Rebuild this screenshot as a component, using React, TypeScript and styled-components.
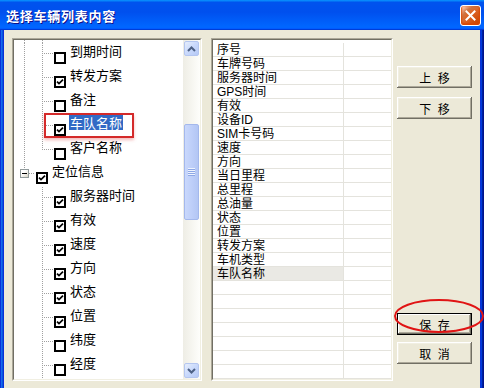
import React from 'react';
import styled, { createGlobalStyle, css } from 'styled-components';

const FONT = `"Noto Sans CJK SC", "Noto Sans", sans-serif`;
const LIST_FONT = `"Liberation Sans", "Noto Sans CJK SC", sans-serif`;
const VDOT = 'repeating-linear-gradient(to bottom, #a0a0a0 0 1px, transparent 1px 2px)';
const HDOT = 'repeating-linear-gradient(to right, #a0a0a0 0 1px, transparent 1px 2px)';
const GRID = '#e4e3dd';

const GlobalStyle = createGlobalStyle`
  html, body { margin: 0; padding: 0; background: #ffffff; }
  body { font-family: ${FONT}; }
  *, *::before, *::after { box-sizing: border-box; }
`;

const Window = styled.div`
  position: relative;
  width: 484px;
  height: 388px;
  display: flex;
  flex-direction: column;
  overflow: hidden;
  font-family: ${FONT};
`;

const TitleBar = styled.div`
  flex: none;
  height: 30px;
  display: flex;
  align-items: center;
  justify-content: space-between;
  padding: 0 3px 0 6px;
  background: linear-gradient(180deg, #0997ff, #0053ee 8%, #0050ee 40%, #0066ff 88%, #0066ff 93%, #005bff 95%, #003dd7 96%, #003dd7);
`;

const Title = styled.div`
  color: #ffffff;
  font-weight: 700;
  font-size: 13px;
  letter-spacing: 0.75px;
  text-shadow: 1px 1px #0f1089;
  white-space: nowrap;
`;

const CloseButton = styled.div`
  width: 21px;
  height: 21px;
  margin-top: 1px;
  border: 1px solid #ffffff;
  border-radius: 3px;
  background: radial-gradient(circle at 90% 90%, #cc4600 0%, #dc6527 55%, #cd7546 70%, #ffccb2 90%, #ffffff 100%);
  box-shadow: inset 0 -1px 2px 1px #da4600;
  display: flex;
  align-items: center;
  justify-content: center;
`;

const Frame = styled.div`
  flex: 1;
  display: flex;
  padding: 0 4px 4px 4px;
  background: #0831d9;
  box-shadow: inset -1px -1px #00138c, inset 1px 0 #0831d9, inset -2px -2px #001ea0, inset 2px 0 #166aee, inset -3px -3px #003bda, inset 3px 0 #0855dd;
`;

const Client = styled.div`
  flex: 1;
  display: flex;
  padding: 8px 8px 10px 8px;
  background: #ece9d8;
`;

const TreePanel = styled.div`
  position: relative;
  flex: none;
  width: 190px;
  margin-right: 9px;
  border: 1px solid;
  border-color: #aca899 #ffffff #ffffff #aca899;
  display: flex;
`;

const SunkenInner = styled.div`
  flex: 1;
  display: flex;
  border: 1px solid;
  border-color: #716f64 #f1efe2 #f1efe2 #716f64;
  background: #ffffff;
  overflow: hidden;
`;

const TreeView = styled.div`
  flex: 1;
  min-width: 0;
  padding-left: 1px;
  overflow: hidden;
`;

const TreeSpacer = styled.div`
  height: 3px;
  display: flex;
`;

const TreeRow = styled.div`
  height: 24px;
  display: flex;
  align-items: flex-start;
`;

const Guide = styled.div<{ $line?: boolean }>`
  flex: none;
  width: 18px;
  align-self: stretch;
  ${p => p.$line && css`
    background: ${VDOT} 9px 0 / 1px 100% no-repeat;
  `}
`;

const Connector = styled.div<{ $last?: boolean }>`
  flex: none;
  width: 20px;
  align-self: stretch;
  background-image: ${VDOT}, ${HDOT};
  background-repeat: no-repeat;
  background-size: 1px ${p => (p.$last ? '11px' : '100%')}, 11px 1px;
  background-position: 9px 0, 9px 10px;
`;

const RootConnector = styled.div`
  flex: none;
  width: 20px;
  align-self: stretch;
  padding: 6px 0 0 5px;
  background-image: ${VDOT}, ${HDOT};
  background-repeat: no-repeat;
  background-size: 1px 6px, 6px 1px;
  background-position: 9px 0, 14px 10px;
`;

const ExpandBox = styled.div`
  width: 9px;
  height: 9px;
  border: 1px solid #919b9c;
  background: linear-gradient(#000000, #000000) center / 5px 1px no-repeat,
    linear-gradient(135deg, #ffffff 35%, #d8d4c4);
`;

const CheckBox = styled.span`
  flex: none;
  display: block;
  width: 12px;
  height: 12px;
  margin: 9px 0 0 1px;
  svg { display: block; }
`;

const TreeLabel = styled.span<{ $selected?: boolean }>`
  margin-left: 3px;
  padding: 0 1px;
  font-size: 13px;
  line-height: 15px;
  white-space: nowrap;
  color: ${p => (p.$selected ? '#ffffff' : '#000000')};
  background: ${p => (p.$selected ? '#316ac5' : 'transparent')};
`;

const ScrollBar = styled.div`
  flex: none;
  width: 17px;
  display: flex;
  flex-direction: column;
  background: linear-gradient(to right, #eeede5, #fefefb);
`;

const ScrollButton = styled.div`
  flex: none;
  height: 15px;
  margin: 1px;
  border: 1px solid #b4c6f0;
  border-radius: 2px;
  background: linear-gradient(135deg, #e6eefc 0%, #c9d9fc 50%, #b6c9f5 100%);
  display: flex;
  align-items: center;
  justify-content: center;
`;

const ScrollTrack = styled.div`
  flex: 1;
  display: flex;
  flex-direction: column;
  padding: 67px 1px 0 1px;
`;

const Thumb = styled.div`
  height: 96px;
  border: 1px solid #a4b8ec;
  border-radius: 2px;
  background: linear-gradient(to right, #c9d8fc, #bccdf8 60%, #b3c6f4);
  display: flex;
  align-items: center;
  justify-content: center;
`;

const Grip = styled.div`
  width: 7px;
  height: 8px;
  background: repeating-linear-gradient(to bottom, #eef3fe 0 1px, #8da7e6 1px 2px);
`;

const Annotation = styled.div`
  position: absolute;
  left: 31px;
  top: 74px;
  width: 90px;
  height: 25px;
  border: 2px solid #d42a2a;
  box-shadow: 0 2px 3px rgba(220, 60, 60, 0.35);
  pointer-events: none;
`;

const ListPanel = styled.div`
  flex: none;
  width: 182px;
  border: 1px solid;
  border-color: #aca899 #ffffff #ffffff #aca899;
  display: flex;
`;

const ListBody = styled.div`
  flex: 1;
  min-width: 0;
  padding-top: 3px;
  overflow: hidden;
`;

const ListRow = styled.div`
  height: 14px;
  display: grid;
  grid-template-columns: 131px 1fr;
  background: linear-gradient(${GRID}, ${GRID}) left bottom / 100% 1px no-repeat;
`;

const ListCell = styled.div<{ $first?: boolean; $selected?: boolean }>`
  padding-left: 4px;
  font-family: ${LIST_FONT};
  font-size: 12px;
  line-height: 14px;
  height: 14px;
  white-space: nowrap;
  color: #000000;
  ${p => p.$first && css`border-right: 1px solid ${GRID};`}
  ${p => p.$selected && css`
    background: linear-gradient(#eae9e4, #eae9e4) left top / 100% 13px no-repeat;
  `}
`;

const ButtonColumn = styled.div`
  flex: none;
  width: 75px;
  margin-left: 4px;
  display: flex;
  flex-direction: column;
  padding: 28px 0 17px 0;
`;

const ButtonSpacer = styled.div`
  flex: 1;
`;

const Button = styled.div<{ $gap?: number; $default?: boolean }>`
  flex: none;
  height: 22px;
  margin-top: ${p => p.$gap ?? 0}px;
  display: flex;
  align-items: center;
  justify-content: center;
  font-size: 12px;
  word-spacing: 4px;
  color: #000000;
  background: #ece9d8;
  box-shadow: inset -1px -1px #716f64, inset 1px 1px #ffffff, inset -2px -2px #aca899, inset 2px 2px #f1efe2;
  ${p => p.$default && css`
    border: 1px solid #000000;
    box-shadow: inset -1px -1px #716f64, inset 1px 1px #ffffff, inset -2px -2px #aca899;
  `}
`;

const SaveMark = styled.svg`
  position: absolute;
  left: 393px;
  top: 298px;
  pointer-events: none;
`;

type Node = {
  label: string;
  checked: boolean;
  kind: 'child' | 'lastChild' | 'root';
  parentLine: boolean;
  selected?: boolean;
};

const TREE: Node[] = [
  { label: '到期时间', checked: false, kind: 'child', parentLine: true },
  { label: '转发方案', checked: true, kind: 'child', parentLine: true },
  { label: '备注', checked: false, kind: 'child', parentLine: true },
  { label: '车队名称', checked: true, kind: 'child', parentLine: true, selected: true },
  { label: '客户名称', checked: false, kind: 'lastChild', parentLine: true },
  { label: '定位信息', checked: true, kind: 'root', parentLine: false },
  { label: '服务器时间', checked: true, kind: 'child', parentLine: false },
  { label: '有效', checked: true, kind: 'child', parentLine: false },
  { label: '速度', checked: true, kind: 'child', parentLine: false },
  { label: '方向', checked: true, kind: 'child', parentLine: false },
  { label: '状态', checked: true, kind: 'child', parentLine: false },
  { label: '位置', checked: true, kind: 'child', parentLine: false },
  { label: '纬度', checked: false, kind: 'child', parentLine: false },
  { label: '经度', checked: false, kind: 'child', parentLine: false },
];

const LIST_ITEMS = [
  '序号', '车牌号码', '服务器时间', 'GPS时间', '有效', '设备ID', 'SIM卡号码', '速度', '方向',
  '当日里程', '总里程', '总油量', '状态', '位置', '转发方案', '车机类型', '车队名称',
];
const LIST_ROWS = 24;

function Check({ checked }: { checked: boolean }) {
  return (
    <CheckBox>
      <svg width="12" height="12" viewBox="0 0 12 12">
        <rect x="1" y="1" width="10" height="10" fill="#ffffff" stroke="#000000" strokeWidth="2" />
        {checked && <path d="M3 5.6 L5 7.6 L9 3.6" fill="none" stroke="#000000" strokeWidth="1.7" />}
      </svg>
    </CheckBox>
  );
}

function Arrow({ up }: { up: boolean }) {
  return (
    <svg width="9" height="6" viewBox="0 0 9 6">
      <path d={up ? 'M1 5 L4.5 1.5 L8 5' : 'M1 1 L4.5 4.5 L8 1'} fill="none" stroke="#4d6185" strokeWidth="2" />
    </svg>
  );
}

export default function App() {
  return (
    <>
      <GlobalStyle />
      <Window>
        <TitleBar>
          <Title>选择车辆列表内容</Title>
          <CloseButton>
            <svg width="11" height="11" viewBox="0 0 11 11">
              <path d="M1.5 1.5 L9.5 9.5 M9.5 1.5 L1.5 9.5" stroke="#ffffff" strokeWidth="2" strokeLinecap="square" />
            </svg>
          </CloseButton>
        </TitleBar>
        <Frame>
          <Client>
            <TreePanel>
              <SunkenInner>
                <TreeView>
                  <TreeSpacer>
                    <Guide $line />
                    <Guide $line />
                  </TreeSpacer>
                  {TREE.map(n => (
                    <TreeRow key={n.label}>
                      {n.kind === 'root' ? (
                        <RootConnector>
                          <ExpandBox />
                        </RootConnector>
                      ) : (
                        <>
                          <Guide $line={n.parentLine} />
                          <Connector $last={n.kind === 'lastChild'} />
                        </>
                      )}
                      <Check checked={n.checked} />
                      <TreeLabel $selected={n.selected}>{n.label}</TreeLabel>
                    </TreeRow>
                  ))}
                </TreeView>
                <ScrollBar>
                  <ScrollButton><Arrow up /></ScrollButton>
                  <ScrollTrack>
                    <Thumb><Grip /></Thumb>
                  </ScrollTrack>
                  <ScrollButton><Arrow up={false} /></ScrollButton>
                </ScrollBar>
              </SunkenInner>
              <Annotation />
            </TreePanel>
            <ListPanel>
              <SunkenInner>
                <ListBody>
                  {Array.from({ length: LIST_ROWS }, (_, i) => {
                    const item = LIST_ITEMS[i];
                    return (
                      <ListRow key={i}>
                        <ListCell $first $selected={i === LIST_ITEMS.length - 1}>{item ?? ''}</ListCell>
                        <ListCell />
                      </ListRow>
                    );
                  })}
                </ListBody>
              </SunkenInner>
            </ListPanel>
            <ButtonColumn>
              <Button>上 移</Button>
              <Button $gap={9}>下 移</Button>
              <ButtonSpacer />
              <Button $default>保 存</Button>
              <Button $gap={7}>取 消</Button>
            </ButtonColumn>
          </Client>
        </Frame>
        <SaveMark width="91" height="36" viewBox="0 0 91 36">
          <ellipse cx="46" cy="18" rx="44" ry="16" fill="none" stroke="#e01414" strokeWidth="2" />
        </SaveMark>
      </Window>
    </>
  );
}
